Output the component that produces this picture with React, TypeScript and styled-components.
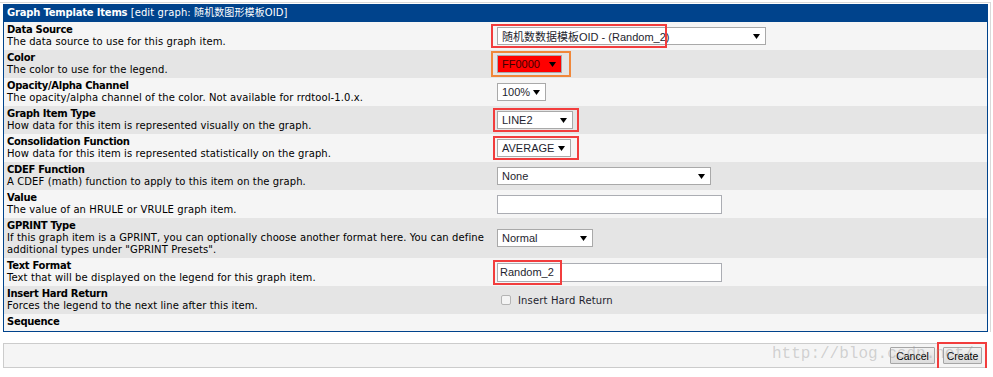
import React from "react";
import styled, { createGlobalStyle } from "styled-components";

const GlobalStyle = createGlobalStyle`
  body {
    margin: 0;
    background: #ffffff;
    font-family: "DejaVu Sans", Verdana, "Noto Sans CJK SC", sans-serif;
  }
`;

const Page = styled.div`
  width: 993px;
  padding-top: 2px;
`;

const Frame = styled.div`
  box-sizing: border-box;
  width: 991px;
  padding-top: 1px;
  border-top: 1px solid #d9d9d9;
  border-right: 1px solid #d9d9d9;
`;

const Table = styled.div`
  box-sizing: border-box;
  width: 985px;
  margin-left: 3px;
  border: 1px solid #00438c;
  border-top: 0;
`;

const Header = styled.div`
  height: 18px;
  padding: 0 3px;
  background: #00438c;
  color: #ffffff;
  font-size: 10px;
  line-height: 18px;
  letter-spacing: 0.1px;
  white-space: nowrap;

  strong {
    letter-spacing: -0.2px;
  }
`;

const Row = styled.div<{ $alt: boolean }>`
  display: grid;
  grid-template-columns: 490px 1fr;
  background: ${(p) => (p.$alt ? "#e5e5e5" : "#f5f5f5")};
`;

const Label = styled.div<{ $last: boolean }>`
  padding: ${(p) => (p.$last ? "2px 3px 3px" : "2px 3px")};
  font-size: 10px;
  line-height: 12px;
  color: #000000;
`;

const Title = styled.div`
  font-weight: bold;
  letter-spacing: -0.3px;
  white-space: nowrap;
`;

const Desc = styled.div`
  letter-spacing: 0.1px;
  white-space: nowrap;
`;

const Field = styled.div`
  display: flex;
  align-items: center;
  padding: 0 3px;
`;

const Control = styled.span`
  position: relative;
  display: inline-flex;
`;

const Highlight = styled.span<{
  $color: string;
  $left: number;
  $top: number;
  $w: number;
  $h: number;
}>`
  position: absolute;
  box-sizing: border-box;
  left: ${(p) => p.$left}px;
  top: ${(p) => p.$top}px;
  width: ${(p) => p.$w}px;
  height: ${(p) => p.$h}px;
  border: 2px solid ${(p) => p.$color};
  pointer-events: none;
`;

const SelectBox = styled.div<{ $width: number; $bg?: string; $color?: string }>`
  box-sizing: border-box;
  display: flex;
  align-items: center;
  justify-content: space-between;
  width: ${(p) => p.$width}px;
  height: 18px;
  padding: 0 5px 0 4px;
  border: 1px solid #a9a9a9;
  background: ${(p) => p.$bg ?? "#ffffff"};
  color: ${(p) => p.$color ?? "#1e1e2e"};
  font-family: "Liberation Sans", Arial, "Noto Sans CJK SC", sans-serif;
  font-size: 11px;
  white-space: nowrap;
`;

const TextInput = styled.input`
  box-sizing: border-box;
  width: 225px;
  height: 19px;
  margin: 0;
  padding: 0 2px;
  border: 1px solid #abadb3;
  background: #ffffff;
  color: #1e1e2e;
  font-family: "Liberation Sans", Arial, sans-serif;
  font-size: 11px;
  outline: none;
`;

const CheckLabel = styled.label`
  display: flex;
  align-items: center;
  gap: 7px;
  margin-left: 4px;
  font-size: 10px;
  letter-spacing: 0.15px;
  color: #1e1e2e;
`;

const CheckBox = styled.span`
  box-sizing: border-box;
  width: 10px;
  height: 10px;
  border: 1px solid #b4b4b4;
  border-radius: 2px;
  background: #f4f4f4;
`;

const ButtonBar = styled.div`
  position: relative;
  box-sizing: border-box;
  display: flex;
  align-items: center;
  justify-content: flex-end;
  gap: 8px;
  width: 983px;
  height: 25px;
  margin: 11px 0 0 3px;
  padding-right: 3px;
  border: 1px solid #cccccc;
  background: #f5f5f5;
`;

const Button = styled.button<{ $width: number }>`
  box-sizing: border-box;
  width: ${(p) => p.$width}px;
  height: 17px;
  margin: 0;
  padding: 0;
  border: 1px solid #a6a6a6;
  border-radius: 1px;
  background: linear-gradient(#f2f2f2, #dddddd);
  color: #000000;
  font-family: "Liberation Sans", Arial, sans-serif;
  font-size: 10.5px;
`;

const Watermark = styled.span`
  position: absolute;
  left: 768px;
  top: 2px;
  font-family: "Liberation Mono", "Courier New", monospace;
  font-size: 16px;
  line-height: 16px;
  color: rgba(150, 150, 150, 0.4);
  pointer-events: none;
  white-space: nowrap;
`;

interface Item {
  title: string;
  desc?: React.ReactNode;
  field?: React.ReactNode;
}

const Arrow: React.FC = () => (
  <svg width="7" height="5" viewBox="0 0 7 5">
    <polygon points="0,0 7,0 3.5,5" fill="#000" />
  </svg>
);

const Select: React.FC<{
  value: string;
  width: number;
  bg?: string;
  color?: string;
}> = ({ value, width, bg, color }) => (
  <SelectBox $width={width} $bg={bg} $color={color}>
    <span>{value}</span>
    <Arrow />
  </SelectBox>
);

const items: Item[] = [
  {
    title: "Data Source",
    desc: "The data source to use for this graph item.",
    field: (
      <Control>
        <Select value="随机数数据模板OID - (Random_2)" width={269} />
        <Highlight $color="#f23d3d" $left={-6} $top={-3} $w={176} $h={24} />
      </Control>
    ),
  },
  {
    title: "Color",
    desc: "The color to use for the legend.",
    field: (
      <Control>
        <Select value="FF0000" width={65} bg="#ff0000" color="#3d0000" />
        <Highlight $color="#f0873a" $left={-6} $top={-4} $w={80} $h={26} />
      </Control>
    ),
  },
  {
    title: "Opacity/Alpha Channel",
    desc: "The opacity/alpha channel of the color. Not available for rrdtool-1.0.x.",
    field: <Select value="100%" width={49} />,
  },
  {
    title: "Graph Item Type",
    desc: "How data for this item is represented visually on the graph.",
    field: (
      <Control>
        <Select value="LINE2" width={76} />
        <Highlight $color="#f23d3d" $left={-4} $top={-3} $w={86} $h={24} />
      </Control>
    ),
  },
  {
    title: "Consolidation Function",
    desc: "How data for this item is represented statistically on the graph.",
    field: (
      <Control>
        <Select value="AVERAGE" width={74} />
        <Highlight $color="#f23d3d" $left={-4} $top={-3} $w={86} $h={24} />
      </Control>
    ),
  },
  {
    title: "CDEF Function",
    desc: "A CDEF (math) function to apply to this item on the graph.",
    field: <Select value="None" width={214} />,
  },
  {
    title: "Value",
    desc: "The value of an HRULE or VRULE graph item.",
    field: <TextInput readOnly defaultValue="" />,
  },
  {
    title: "GPRINT Type",
    desc: (
      <>
        If this graph item is a GPRINT, you can optionally choose another
        format here. You can define
        <br />
        additional types under "GPRINT Presets".
      </>
    ),
    field: <Select value="Normal" width={96} />,
  },
  {
    title: "Text Format",
    desc: "Text that will be displayed on the legend for this graph item.",
    field: (
      <Control>
        <TextInput readOnly defaultValue="Random_2" />
        <Highlight $color="#f23d3d" $left={-4} $top={-3} $w={69} $h={25} />
      </Control>
    ),
  },
  {
    title: "Insert Hard Return",
    desc: "Forces the legend to the next line after this item.",
    field: (
      <CheckLabel>
        <CheckBox />
        Insert Hard Return
      </CheckLabel>
    ),
  },
  { title: "Sequence" },
];

const App: React.FC = () => (
  <Page>
    <GlobalStyle />
    <Frame>
      <Table>
        <Header>
          <strong>Graph Template Items</strong> [edit graph: 随机数图形模板OID]
        </Header>
        {items.map((item, i) => (
          <Row key={item.title} $alt={i % 2 === 1}>
            <Label $last={!item.desc}>
              <Title>{item.title}</Title>
              {item.desc && <Desc>{item.desc}</Desc>}
            </Label>
            <Field>{item.field}</Field>
          </Row>
        ))}
      </Table>
    </Frame>
    <ButtonBar>
      <Button $width={45}>Cancel</Button>
      <Control>
        <Button $width={39}>Create</Button>
        <Highlight $color="#f23d3d" $left={-6} $top={-5} $w={50} $h={28} />
      </Control>
      <Watermark>http://blog.csdn.net/</Watermark>
    </ButtonBar>
  </Page>
);

export default App;
